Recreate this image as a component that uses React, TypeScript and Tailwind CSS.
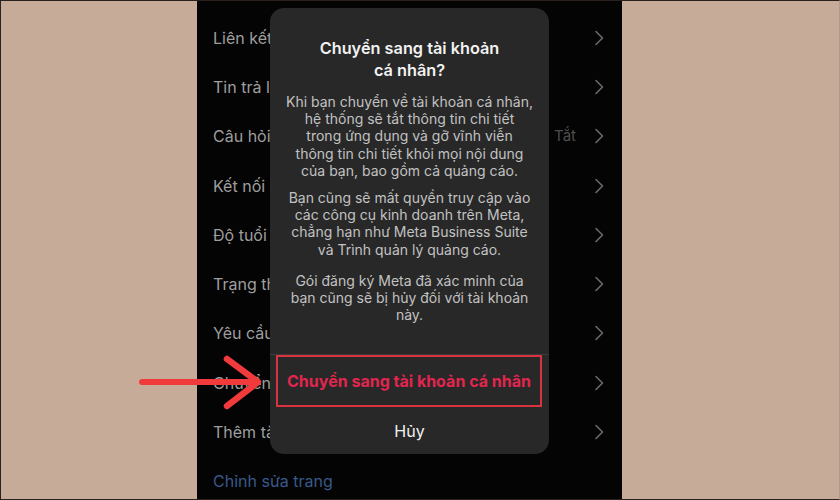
import React from "react";

const rows: { label: string; extra?: string }[] = [
  { label: "Liên kết" },
  { label: "Tin trả lời" },
  { label: "Câu hỏi", extra: "Tắt" },
  { label: "Kết nối" },
  { label: "Độ tuổi" },
  { label: "Trạng thái" },
  { label: "Yêu cầu" },
  { label: "Chuyển" },
  { label: "Thêm tài" },
];

function Chevron() {
  return (
    <svg width="10" height="16" viewBox="0 0 10 16" fill="none">
      <polyline points="2,1.5 8.5,8 2,14.5" stroke="#6a6a6a" strokeWidth="1.6" strokeLinecap="round" strokeLinejoin="round" />
    </svg>
  );
}

export default function App() {
  return (
    <div
      className="relative w-[840px] h-[500px] overflow-hidden bg-[#c6ac98] border-t border-l border-b border-r border-t-[#2a211c] border-l-[#2a211c] border-b-[#2a211c] border-r-[#b39a88] flex"
      style={{ fontFamily: "Inter, 'Noto Sans', sans-serif" }}
    >
      <div className="w-[196px] shrink-0" />
      <div className="w-[425px] h-full bg-[#040404] pt-[12px] pl-[16px] pr-[18px] flex flex-col">
        {rows.map((r) => (
          <div key={r.label} className="h-[49.3px] shrink-0 flex items-center justify-between">
            <span className="text-[16px] text-[#9e9e9e] whitespace-nowrap">{r.label}</span>
            <div className="flex items-center gap-[18px]">
              {r.extra && <span className="text-[15px] text-[#4e4e4e]">{r.extra}</span>}
              <Chevron />
            </div>
          </div>
        ))}
        <div className="h-[49.3px] shrink-0 flex items-center">
          <span className="text-[16px] text-[#38598a]">Chỉnh sửa trang</span>
        </div>
      </div>
      <div className="flex-1" />

      {/* Modal */}
      <div className="absolute left-[269px] top-[7px] w-[279px] h-[446px] rounded-[14px] bg-[#282828] flex flex-col">
        <div className="pt-[29px] px-[8px] text-center">
          <div className="text-[16.3px] leading-[22px] font-semibold text-[#f2f2f2]">
            Chuyển sang tài khoản
            <br />
            cá nhân?
          </div>
          <div className="mt-[12px] text-[14px] leading-[17.2px] text-[#c2c2c2]">
            <p>
              Khi bạn chuyển về tài khoản cá nhân,
              <br />
              hệ thống sẽ tắt thông tin chi tiết
              <br />
              trong ứng dụng và gỡ vĩnh viễn
              <br />
              thông tin chi tiết khỏi mọi nội dung
              <br />
              của bạn, bao gồm cả quảng cáo.
            </p>
            <p className="mt-[10px]">
              Bạn cũng sẽ mất quyền truy cập vào
              <br />
              các công cụ kinh doanh trên Meta,
              <br />
              chẳng hạn như Meta Business Suite
              <br />
              và Trình quản lý quảng cáo.
            </p>
            <p className="mt-[14px]">
              Gói đăng ký Meta đã xác minh của
              <br />
              bạn cũng sẽ bị hủy đối với tài khoản
              <br />
              này.
            </p>
          </div>
        </div>
        <div className="mt-auto border-t border-[#3a3a3a]" />
        <div className="ml-[6px] mr-[7px] h-[52px] border-2 border-[#d8333f] flex items-center justify-center">
          <span className="text-[16px] font-bold text-[#e0264f] whitespace-nowrap">Chuyển sang tài khoản cá nhân</span>
        </div>
        <div className="h-[47px] flex items-center justify-center">
          <span className="text-[16px] text-[#f2f2f2]">Hủy</span>
        </div>
      </div>

      {/* Arrow */}
      <svg className="absolute left-0 top-0" width="840" height="500" viewBox="0 0 840 500" fill="none">
        <line x1="141" y1="381" x2="256" y2="381" stroke="#f03a3c" strokeWidth="6" strokeLinecap="round" />
        <polyline points="226,358 257,381 226,405" stroke="#f03a3c" strokeWidth="6.5" strokeLinecap="round" strokeLinejoin="round" />
      </svg>
    </div>
  );
}
